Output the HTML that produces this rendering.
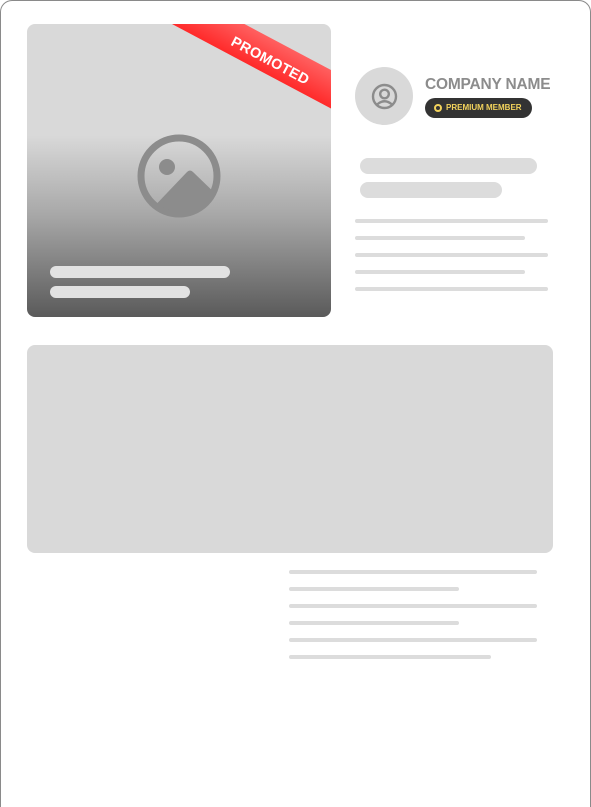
<!DOCTYPE html>
<html><head><style>
*{margin:0;padding:0;box-sizing:border-box}
html,body{width:591px;height:807px;overflow:hidden}
body{background:#fff;position:relative;font-family:"Liberation Sans",sans-serif}
.frame{position:absolute;left:0;top:0;width:591px;height:807px;border:1px solid #8a8a8a;border-bottom:none;border-radius:12px 12px 0 0}
.img{position:absolute;left:27px;top:24px;width:304px;height:293px;border-radius:8px;overflow:hidden;background:linear-gradient(#d9d9d9 0%,#d9d9d9 38%,#a8a8a8 65%,#5a5a5a 100%)}
.rib{position:absolute;left:145px;top:-34px;width:208px;height:34px;background:linear-gradient(#ff6060,#ff2a2a);transform:rotate(28deg);transform-origin:0 100%;color:#fff;font-weight:bold;font-size:14.5px;line-height:30px;text-align:center;letter-spacing:.3px;padding-top:6px}
.bar{position:absolute;background:#e2e2e2;border-radius:6px}
.g{position:absolute;background:#dcdcdc;border-radius:3px;height:4px}
</style></head><body>
<div class="frame"></div>
<div class="img">
 <div class="rib">PROMOTED</div>
 <svg style="position:absolute;left:110px;top:110px" width="84" height="84" viewBox="0 0 84 84">
  <defs><clipPath id="c"><circle cx="42" cy="42" r="35"/></clipPath></defs>
  <circle cx="42" cy="42" r="38" fill="none" stroke="#8c8c8c" stroke-width="7"/>
  <circle cx="30" cy="33" r="8" fill="#8c8c8c"/>
  <path d="M10 80 L50 38 Q53 35 56 38 L84 65 L84 84 L0 84Z" fill="#8c8c8c" clip-path="url(#c)"/>
 </svg>
 <div class="bar" style="left:23px;top:242px;width:180px;height:12px"></div>
 <div class="bar" style="left:23px;top:262px;width:140px;height:12px"></div>
</div>
<div style="position:absolute;left:355px;top:67px;width:58px;height:58px;border-radius:50%;background:#d9d9d9"></div>
<svg style="position:absolute;left:371px;top:83px" width="27" height="27" viewBox="0 0 27 27" fill="none" stroke="#8c8c8c" stroke-width="2.4">
 <circle cx="13.5" cy="13.5" r="11.5"/><circle cx="13.5" cy="11" r="4.3"/><path d="M6 21.5 Q13.5 15 21 21.5"/>
</svg>
<div style="position:absolute;left:425px;top:76px;font-size:15.5px;font-weight:bold;color:#8c8c8c;letter-spacing:-.2px">COMPANY NAME</div>
<div style="position:absolute;left:425px;top:98px;width:107px;height:20px;border-radius:10px;background:#333;color:#f3d35c;font-size:8px;font-weight:bold;line-height:20px;padding-left:21px">PREMIUM MEMBER</div>
<div style="position:absolute;left:434px;top:104px;width:8px;height:8px;border-radius:50%;border:2px solid #f3d35c"></div>
<div class="bar" style="left:360px;top:158px;width:177px;height:16px;background:#dcdcdc;border-radius:8px"></div>
<div class="bar" style="left:360px;top:182px;width:142px;height:16px;background:#dcdcdc;border-radius:8px"></div>
<div class="g" style="left:355px;top:219px;width:193px"></div>
<div class="g" style="left:355px;top:236px;width:170px"></div>
<div class="g" style="left:355px;top:253px;width:193px"></div>
<div class="g" style="left:355px;top:270px;width:170px"></div>
<div class="g" style="left:355px;top:287px;width:193px"></div>
<div style="position:absolute;left:27px;top:345px;width:526px;height:208px;border-radius:8px;background:#d9d9d9"></div>
<div class="g" style="left:289px;top:570px;width:248px"></div>
<div class="g" style="left:289px;top:587px;width:170px"></div>
<div class="g" style="left:289px;top:604px;width:248px"></div>
<div class="g" style="left:289px;top:621px;width:170px"></div>
<div class="g" style="left:289px;top:638px;width:248px"></div>
<div class="g" style="left:289px;top:655px;width:202px"></div>
</body></html>
